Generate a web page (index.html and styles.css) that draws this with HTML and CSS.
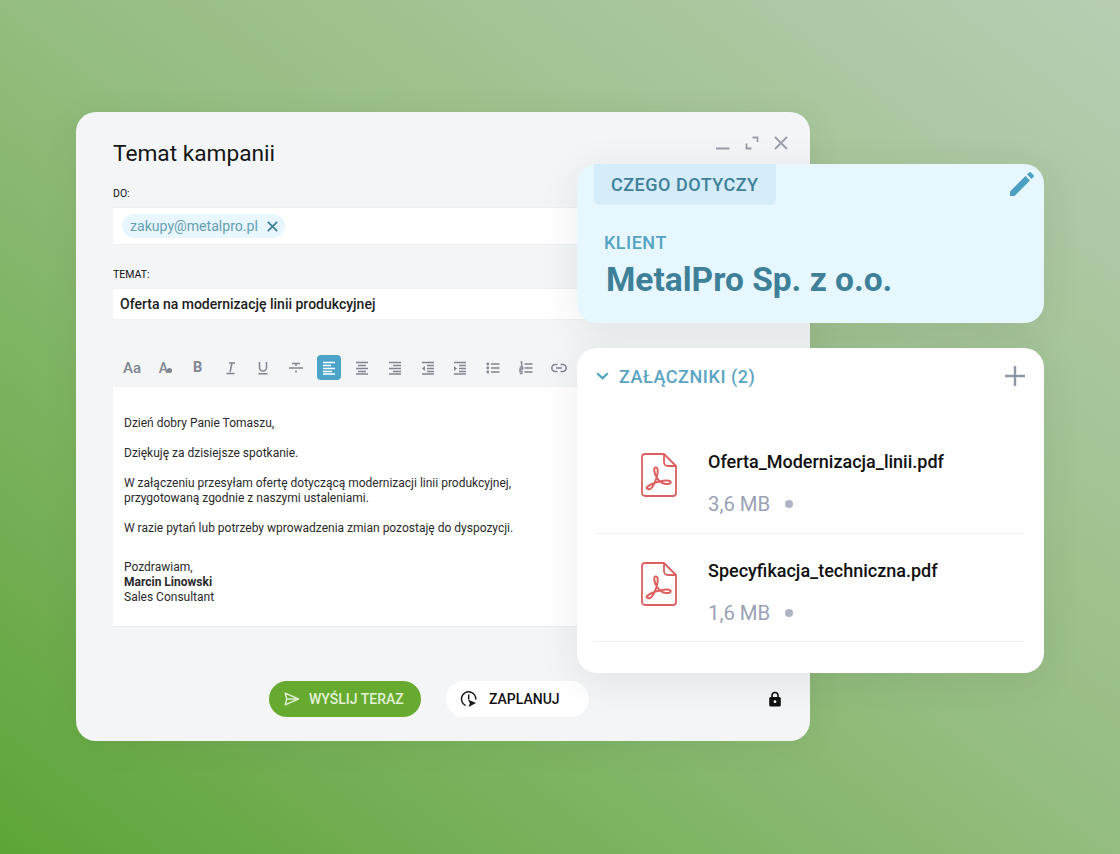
FILE: index.html
```html
<!DOCTYPE html>
<html lang="pl">
<head>
    <meta charset="UTF-8">
    <meta name="viewport" content="width=device-width, initial-scale=1.0">
    <title>Temat kampanii</title>
    <link rel="stylesheet" href="styles.css">
</head>
<body>
    <div class="stage">
        <div class="window">
            <div class="window-controls">
                <svg width="14" height="14" viewBox="0 0 14 14"><path d="M0 12.500h13.500" stroke="#9a9ea8" stroke-width="2"/></svg>
                <svg width="14" height="14" viewBox="0 0 14 14" fill="none" stroke="#9a9ea8" stroke-width="1.800"><path d="M7.500 1.500h5v4.500M1.500 7.500v5h5"/></svg>
                <svg width="14" height="14" viewBox="0 0 14 14" fill="none" stroke="#9a9ea8" stroke-width="1.800"><path d="M1 1l12 12M13 1L1 13"/></svg>
            </div>
            <h1>Temat kampanii</h1>

            <div class="label">DO:</div>
            <div class="field field-to">
                <span class="chip">zakupy@metalpro.pl
                    <svg width="11" height="11" viewBox="0 0 11 11" fill="none" stroke="#3f7f98" stroke-width="1.700"><path d="M.8.8l9.400 9.400M10.200.8L.8 10.200"/></svg>
                </span>
            </div>

            <div class="label label-subject">TEMAT:</div>
            <div class="field field-subject">Oferta na modernizację linii produkcyjnej</div>

            <div class="toolbar">
                <span class="tool tool-aa">Aa</span>
                <span class="tool tool-fill">A<i></i></span>
                <span class="tool tool-b">B</span>
                <span class="tool"><svg width="14" height="14" viewBox="0 0 14 14" fill="none" stroke="#80858f" stroke-width="1.500"><path d="M5 2h6M8 2L6 11M2.500 12.500h8"/></svg></span>
                <span class="tool"><svg width="14" height="14" viewBox="0 0 14 14" fill="none" stroke="#80858f" stroke-width="1.500"><path d="M3.500 1v5.500a3.500 3.500 0 0 0 7 0V1M2.500 12.800h9"/></svg></span>
                <span class="tool"><svg width="14" height="14" viewBox="0 0 14 14" fill="none" stroke="#80858f" stroke-width="1.500"><path d="M0 7h14M3 2.500h8M7 2.500V5M7 9.500v2"/></svg></span>
                <span class="tool tool-active"><svg width="14" height="14" viewBox="0 0 14 14" stroke="#fff" stroke-width="1.300"><path d="M1 1.500h12M1 4.500h8M1 7.500h12M1 10.500h9M1 13h12"/></svg></span>
                <span class="tool"><svg width="14" height="14" viewBox="0 0 14 14" stroke="#80858f" stroke-width="1.300"><path d="M1 1.500h12M3 4.500h8M1 7.500h12M3 10.500h8M1 13h12"/></svg></span>
                <span class="tool"><svg width="14" height="14" viewBox="0 0 14 14" stroke="#80858f" stroke-width="1.300"><path d="M1 1.500h12M5 4.500h8M1 7.500h12M5 10.500h8M1 13h12"/></svg></span>
                <span class="tool"><svg width="14" height="14" viewBox="0 0 14 14" stroke="#80858f" stroke-width="1.300"><path d="M1 1.500h12M6 4.500h7M6 7.500h7M6 10.500h7M1 13h12"/><path d="M4 5L1 7.500 4 10z" fill="#80858f" stroke="none"/></svg></span>
                <span class="tool"><svg width="14" height="14" viewBox="0 0 14 14" stroke="#80858f" stroke-width="1.300"><path d="M1 1.500h12M6 4.500h7M6 7.500h7M6 10.500h7M1 13h12"/><path d="M1 5l3 2.500L1 10z" fill="#80858f" stroke="none"/></svg></span>
                <span class="tool"><svg width="14" height="14" viewBox="0 0 14 14" stroke="#80858f" stroke-width="1.300"><path d="M5 3h8.500M5 7h8.500M5 11h8.500"/><g fill="#80858f" stroke="none"><circle cx="1.800" cy="3" r="1.400"/><circle cx="1.800" cy="7" r="1.400"/><circle cx="1.800" cy="11" r="1.400"/></g></svg></span>
                <span class="tool"><svg width="14" height="14" viewBox="0 0 14 14" fill="none" stroke="#80858f" stroke-width="1.400"><path d="M5.500 3h8M5.500 7h8M5.500 11h8M1.500 1h1.200v4M.8 6h2.800v2H1v2.500h2.800M.8 12.500h2.800"/></svg></span>
                <span class="tool"><svg width="16" height="14" viewBox="0 0 16 14" fill="none" stroke="#80858f" stroke-width="1.600"><path d="M6.500 3.500H4.300a3.500 3.500 0 0 0 0 7h2.200M9.500 3.500h2.200a3.500 3.500 0 0 1 0 7H9.500M5 7h6"/></svg></span>
            </div>

            <div class="editor">
                <p>Dzień dobry Panie Tomaszu,</p>
                <p>Dziękuję za dzisiejsze spotkanie.</p>
                <p>W załączeniu przesyłam ofertę dotyczącą modernizacji linii produkcyjnej,<br>przygotowaną zgodnie z naszymi ustaleniami.</p>
                <p>W razie pytań lub potrzeby wprowadzenia zmian pozostaję do dyspozycji.</p>
                <p class="signature">Pozdrawiam,<br><strong>Marcin Linowski</strong><br>Sales Consultant</p>
            </div>

            <div class="actions">
                <button class="btn btn-send">
                    <svg width="16" height="14" viewBox="0 0 16 14" fill="none" stroke="#dcefcf" stroke-width="1.400" stroke-linejoin="round"><path d="M1.200 1.200L14.500 7 1.200 12.800 2.800 7zM2.800 7h11.700"/></svg>
                    WYŚLIJ TERAZ
                </button>
                <button class="btn btn-plan">
                    <svg width="18" height="18" viewBox="0 0 18 18" fill="none" stroke="#1a1a1a" stroke-width="1.500"><path d="M5.500 15.500A7.200 7.200 0 1 1 15.800 9.500M8.700 4.500v5"/><path d="M8 9.500l8 3.500-7.500 4 1.300-3.800z" fill="#1a1a1a" stroke="none"/></svg>
                    ZAPLANUJ
                </button>
                <svg class="lock" width="14" height="16" viewBox="0 0 14 16"><path d="M4 6.500V4.500a3 3 0 0 1 6 0v2" fill="none" stroke="#111" stroke-width="1.600"/><rect x="1.200" y="6" width="11.600" height="9.500" rx="1.500" fill="#111"/><circle cx="7" cy="10.700" r="1.400" fill="#fff"/></svg>
            </div>
        </div>

        <div class="card card-about">
            <div class="about-tab">CZEGO DOTYCZY</div>
            <svg class="pencil" width="26" height="26" viewBox="0 0 26 26" fill="#4b9fc0"><path d="M1 20.500L16.500 5l4.500 4.500L5.500 25H1z"/><path d="M18 3.500l2-2a1.500 1.500 0 0 1 2 0l2.500 2.500a1.500 1.500 0 0 1 0 2l-2 2z"/></svg>
            <div class="about-label">KLIENT</div>
            <div class="about-name">MetalPro Sp. z o.o.</div>
        </div>

        <div class="card card-files">
            <div class="files-head">
                <svg width="13" height="8" viewBox="0 0 13 8" fill="none" stroke="#4b9fc0" stroke-width="2"><path d="M1.200 1.200L6.500 6.300l5.300-5.100"/></svg>
                <span class="files-title">ZAŁĄCZNIKI (2)</span>
                <svg width="20" height="20" viewBox="0 0 20 20" stroke="#8f96a6" stroke-width="2.400"><path d="M10 0v20M0 10h20"/></svg>
            </div>
            <div class="file file-first">
                <svg class="pdf" width="36" height="44" viewBox="0 0 36 44" fill="none" stroke="#dc6060" stroke-width="1.800" stroke-linejoin="round"><path d="M4 1h19L35 13v27a3 3 0 0 1-3 3H4a3 3 0 0 1-3-3V4a3 3 0 0 1 3-3z"/><path d="M23 1v8a4 4 0 0 0 4 4h8"/><path d="M6.500 35.500c1.500 1.800 4 .4 6-3.500 2-3.800 4.500-10 4.200-15-.2-3.500-3.800-3.200-3.500.3.400 5 5 12.500 10.500 13.500 3.500.6 6.500-.2 6-1.800-.6-1.700-5.500-1.800-11-.5-5 1.200-10.500 3.500-12.300 5.300-1 1-1 1.200-.4 1.700z" stroke-width="2"/></svg>
                <div class="file-info">
                    <div class="file-name">Oferta_Modernizacja_linii.pdf</div>
                    <div class="file-meta">3,6 MB <i class="dot"></i></div>
                </div>
            </div>
            <div class="file">
                <svg class="pdf" width="36" height="44" viewBox="0 0 36 44" fill="none" stroke="#dc6060" stroke-width="1.800" stroke-linejoin="round"><path d="M4 1h19L35 13v27a3 3 0 0 1-3 3H4a3 3 0 0 1-3-3V4a3 3 0 0 1 3-3z"/><path d="M23 1v8a4 4 0 0 0 4 4h8"/><path d="M6.500 35.500c1.500 1.800 4 .4 6-3.500 2-3.800 4.500-10 4.200-15-.2-3.500-3.800-3.200-3.500.3.400 5 5 12.500 10.500 13.500 3.500.6 6.500-.2 6-1.800-.6-1.700-5.500-1.800-11-.5-5 1.200-10.500 3.500-12.300 5.300-1 1-1 1.200-.4 1.700z" stroke-width="2"/></svg>
                <div class="file-info">
                    <div class="file-name">Specyfikacja_techniczna.pdf</div>
                    <div class="file-meta">1,6 MB <i class="dot"></i></div>
                </div>
            </div>
        </div>
    </div>
</body>
</html>
```

FILE: styles.css
```css
* {
    box-sizing: border-box;
}
body {
    margin: 0;
    font-family: Roboto, "Liberation Sans", sans-serif;
}
.stage {
    position: relative;
    width: 1120px;
    height: 854px;
    overflow: hidden;
    background: linear-gradient(to top right, #5da538 0%, #94bd7f 50%, #b8cdb3 100%);
}

/* mail window */
.window {
    position: absolute;
    left: 76px;
    top: 112px;
    width: 734px;
    height: 629px;
    padding: 28px 37px 0;
    background: #f3f5f7;
    border-radius: 20px;
    box-shadow: 0 4px 30px rgba(70,110,50,0.12);
}
.window-controls {
    position: absolute;
    top: 24px;
    right: 22px;
    display: flex;
    align-items: flex-start;
    gap: 15px;
}
h1 {
    margin: 0;
    font-size: 22.7px;
    line-height: 28px;
    font-weight: 400;
    color: #151515;
}
.label {
    margin-top: 19px;
    font-size: 10.5px;
    line-height: 14px;
    color: #111;
}
.label-subject {
    margin-top: 23px;
}
.field {
    margin-top: 6px;
    width: 660px;
    background: #fff;
    border: 1px solid #eef0f3;
    border-width: 1px 0;
}
.field-to {
    height: 38px;
    padding: 6px 9px;
}
.field-subject {
    height: 32px;
    padding-left: 7px;
    font-size: 14px;
    font-weight: 500;
    line-height: 30px;
    color: #1d1d1d;
}
.chip {
    display: inline-flex;
    align-items: center;
    gap: 9px;
    height: 24px;
    padding: 0 7px 0 8px;
    border-radius: 12px;
    background: #e8f6fd;
    color: #659fb3;
    font-size: 14.1px;
}
.toolbar {
    display: flex;
    align-items: center;
    margin-top: 35px;
    margin-left: 7px;
    gap: 8.85px;
}
.tool {
    display: flex;
    align-items: center;
    justify-content: center;
    width: 24px;
    height: 25px;
    color: #80858f;
    font-weight: 700;
    border-radius: 4px;
}
.tool-aa {
    font-size: 15px;
    font-weight: 500;
}
.tool-b {
    font-size: 14.5px;
}
.tool-fill {
    position: relative;
    font-size: 14px;
    font-weight: 500;
    padding-right: 3px;
}
.tool-fill i {
    position: absolute;
    left: 14px;
    top: 13px;
    width: 5px;
    height: 5px;
    border-radius: 50%;
    background: #80858f;
}
.tool-active {
    background: #4ba4c8;
}
.editor {
    margin-top: 7px;
    width: 660px;
    height: 240px;
    padding: 29px 11px 0;
    background: #fff;
    border-bottom: 1px solid #e9ebef;
    font-size: 12px;
    line-height: 15px;
    color: #2a2a2a;
}
.editor p {
    margin: 0 0 15px;
}
.editor .signature {
    margin-top: 24px;
}
.editor strong {
    font-weight: 700;
}
.actions {
    position: relative;
    display: flex;
    align-items: center;
    margin-top: 54px;
    padding-left: 156px;
    gap: 25px;
}
.btn {
    display: flex;
    align-items: center;
    height: 36px;
    border: none;
    border-radius: 18px;
    font-family: inherit;
    font-size: 14px;
    font-weight: 500;
}
.btn-send {
    width: 152px;
    padding: 0 0 0 15px;
    gap: 9px;
    background: #66ab30;
    color: #e3f2d8;
}
.btn-plan {
    width: 143px;
    padding: 0 0 0 14px;
    gap: 11px;
    background: #fff;
    color: #111;
}
.lock {
    position: absolute;
    left: 655px;
    top: 10px;
}

/* cards on top of the window */
.card {
    position: absolute;
    left: 577px;
    width: 467px;
    border-radius: 20px;
    box-shadow: 0 8px 40px rgba(40,60,40,0.09);
}
.card-about {
    top: 164px;
    height: 159px;
    background: #e7f7ff;
}
.about-tab {
    position: absolute;
    left: 17px;
    top: 0;
    width: 182px;
    height: 41px;
    padding-left: 17px;
    border-radius: 0 0 6px 6px;
    background: #d5ecfb;
    color: #3f8099;
    font-size: 18px;
    font-weight: 500;
    line-height: 41px;
    letter-spacing: 0.5px;
}
.pencil {
    position: absolute;
    right: 9px;
    top: 7px;
}
.about-label {
    position: absolute;
    left: 27px;
    top: 68px;
    color: #54a3c2;
    font-size: 18px;
    font-weight: 500;
    line-height: 22px;
    letter-spacing: 0.5px;
}
.about-name {
    position: absolute;
    left: 29px;
    top: 97px;
    color: #3f8099;
    font-size: 33.5px;
    font-weight: 700;
    line-height: 38px;
}
.card-files {
    top: 348px;
    height: 325px;
    padding: 0 19px 0 17px;
    background: #fff;
}
.files-head {
    display: flex;
    align-items: center;
    height: 56px;
    padding-left: 2px;
    gap: 10px;
}
.files-title {
    flex: 1;
    color: #5aa5c3;
    font-size: 18px;
    font-weight: 500;
    letter-spacing: 0.55px;
}
.file {
    display: flex;
    align-items: flex-start;
    height: 108px;
    padding: 32px 0 0 47px;
    gap: 31px;
    border-bottom: 1px solid #f0f1f4;
}
.file-first {
    height: 130px;
    padding-top: 53px;
}
.pdf {
    flex: none;
    margin-top: -4px;
}
.file-name {
    margin-top: -6px;
    color: #111;
    font-size: 18px;
    font-weight: 500;
    line-height: 22px;
}
.file-meta {
    display: flex;
    align-items: center;
    gap: 15px;
    margin-top: 19px;
    color: #9aa1b3;
    font-size: 20.3px;
    line-height: 24px;
}
.dot {
    display: block;
    width: 8px;
    height: 8px;
    border-radius: 50%;
    background: #aeb4c2;
}
```
